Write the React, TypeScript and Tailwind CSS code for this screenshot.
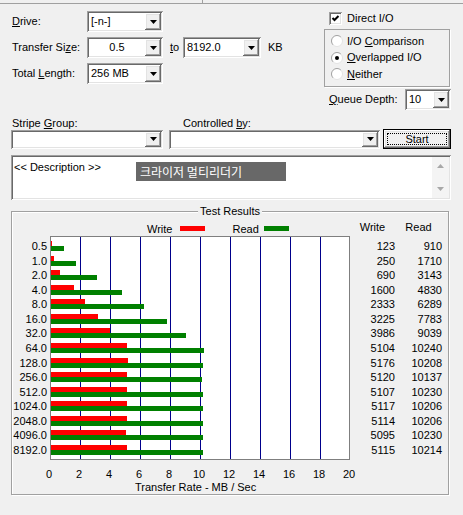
import React from 'react';

const results: [string, number, number][] = [
  ['0.5', 123, 910],
  ['1.0', 250, 1710],
  ['2.0', 690, 3143],
  ['4.0', 1600, 4830],
  ['8.0', 2333, 6289],
  ['16.0', 3225, 7783],
  ['32.0', 3986, 9039],
  ['64.0', 5104, 10240],
  ['128.0', 5176, 10208],
  ['256.0', 5120, 10137],
  ['512.0', 5107, 10230],
  ['1024.0', 5117, 10206],
  ['2048.0', 5114, 10206],
  ['4096.0', 5095, 10230],
  ['8192.0', 5115, 10214],
];

const ROW = 14.57;

const sunken =
  'shadow-[inset_1px_1px_0_#a0a0a0,inset_-1px_-1px_0_#ffffff,inset_2px_2px_0_#696969,inset_-2px_-2px_0_#e3e3e3]';
const raised =
  'shadow-[inset_-1px_-1px_0_#696969,inset_1px_1px_0_#ffffff,inset_-2px_-2px_0_#a0a0a0,inset_2px_2px_0_#e3e3e3]';

const Arrow = () => (
  <svg width="7" height="4" viewBox="0 0 7 4">
    <path d="M0 0h7L3.5 4z" fill="#000" />
  </svg>
);

const Combo = ({ value, size, center }: { value: string; size: string; center?: boolean }) => (
  <div className={`${sunken} ${size} bg-white flex items-center p-[2px]`}>
    <div className={`flex-1 px-[2px] whitespace-nowrap ${center ? 'text-center' : ''}`}>{value}</div>
    <div className={`${raised} w-[16px] h-full bg-[#f0f0f0] flex items-center justify-center`}>
      <Arrow />
    </div>
  </div>
);

const Radio = ({ checked }: { checked?: boolean }) => (
  <svg width="12" height="12" viewBox="0 0 12 12">
    <circle cx="6" cy="6" r="5.5" fill="#fff" />
    <path d="M2.1 9.9A5.5 5.5 0 0 1 9.9 2.1" stroke="#a0a0a0" fill="none" />
    <path d="M9.9 2.1A5.5 5.5 0 0 1 2.1 9.9" stroke="#e3e3e3" fill="none" />
    {checked && <circle cx="6" cy="6" r="2" fill="#000" />}
  </svg>
);

const Chart = () => (
  <div className="w-[300px] h-[224px] bg-white border border-[#7f7f7f]">
    <svg width="298" height="222" viewBox="1 1 298 222" shapeRendering="crispEdges" className="block">
      {[1, 2, 3, 4, 5, 6, 7, 8, 9].map((k) => (
        <line key={k} x1={30 * k + 0.5} x2={30 * k + 0.5} y1={0} y2={224} stroke="#00008b" />
      ))}
      {results.map(([s, w, r], i) => {
        const y = Math.round(5 + i * ROW);
        return (
          <g key={s}>
            <rect x={0} y={y} width={w * 0.015} height={5} fill="#ff0000" />
            <rect x={0} y={y + 5} width={r * 0.015} height={5} fill="#008000" />
          </g>
        );
      })}
    </svg>
  </div>
);

export default function App() {
  return (
    <div className="w-[463px] h-[515px] bg-[#f0f0f0] overflow-hidden text-[11px] leading-[13px] text-black font-['Liberation_Sans',Arial,sans-serif]">
      {/* toolbar edge */}
      <div className="h-[4px] flex border-b border-[#a0a0a0]">
        <div className="w-[203px] border-r border-[#a0a0a0]" />
      </div>

      <div className="flex pt-[7px]">
        <div className="ml-[12px] w-[312px] flex flex-col gap-[5px]">
          <div className="flex items-center h-[21px]">
            <div className="w-[75px]">
              <span className="underline">D</span>rive:
            </div>
            <Combo value="[-n-]" size="w-[76px] h-[21px]" />
          </div>
          <div className="flex items-center h-[21px]">
            <div className="w-[75px]">
              Transfer Si<span className="underline">z</span>e:
            </div>
            <Combo value="0.5" size="w-[76px] h-[21px]" center />
            <div className="ml-[7px] w-[13px]">
              <span className="underline">t</span>o
            </div>
            <Combo value="8192.0" size="w-[78px] h-[21px]" />
            <div className="ml-[7px]">KB</div>
          </div>
          <div className="flex items-center h-[21px]">
            <div className="w-[75px]">
              Total <span className="underline">L</span>ength:
            </div>
            <Combo value="256 MB" size="w-[76px] h-[21px]" />
          </div>
        </div>

        <div className="w-[127px] flex flex-col">
          <div className="mt-[1px] pl-[5px] flex items-center gap-[5px] h-[13px]">
            <div className={`${sunken} w-[13px] h-[13px] bg-white`}>
              <svg width="13" height="13" viewBox="0 0 13 13">
                <path d="M3.5 6L5.5 8L9.5 4" stroke="#000" strokeWidth="2" fill="none" />
              </svg>
            </div>
            <div>Direct I/O</div>
          </div>
          <div className="mt-[4px] w-[126px] h-[58px] border border-[#a0a0a0] shadow-[1px_1px_0_#ffffff] pt-[3px] pl-[6px]">
            {[
              ['I/O ', 'C', 'omparison', false],
              ['', 'O', 'verlapped I/O', true],
              ['', 'N', 'either', false],
            ].map(([a, u, b, c]) => (
              <div key={String(b)} className="h-[16.5px] flex items-center gap-[4px]">
                <Radio checked={Boolean(c)} />
                <div>
                  {a}
                  <span className="underline">{u}</span>
                  {b}
                </div>
              </div>
            ))}
          </div>
          <div className="mt-[2px] h-[21px] flex items-center pl-[5px]">
            <div className="w-[76px]">
              <span className="underline">Q</span>ueue Depth:
            </div>
            <Combo value="10" size="w-[46px] h-[21px]" />
          </div>
        </div>
      </div>

      <div className="mt-[7px] h-[12px] leading-[12px] flex">
        <div className="pl-[12px] w-[183px]">
          Stripe <span className="underline">G</span>roup:
        </div>
        <div>
          Controlled <span className="underline">b</span>y:
        </div>
      </div>

      <div className="mt-[0px] h-[20px] flex items-center pl-[11px]">
        <Combo value="" size="w-[152px] h-[19px]" />
        <div className="ml-[6px]">
          <Combo value="" size="w-[211px] h-[19px]" />
        </div>
        <div className="ml-[3px] w-[68px] h-[20px] border border-black bg-[#f0f0f0]">
          <div className={`${raised} w-full h-full p-[3px]`}>
            <div className="w-full h-full border border-dotted border-black flex items-center justify-center">
              Start
            </div>
          </div>
        </div>
      </div>

      <div className={`${sunken} relative mt-[6px] ml-[11px] w-[440px] h-[45px] bg-white p-[2px] flex`}>
        <div className="flex-1 pl-[1px] pt-[4px]">&lt;&lt; Description &gt;&gt;</div>
        <div className="w-[17px] h-full bg-[#f4f4f4] flex flex-col items-center justify-between py-[7px]">
          <svg width="7" height="4" viewBox="0 0 7 4">
            <path d="M0 4h7L3.5 0z" fill="#a8a8a8" />
          </svg>
          <svg width="7" height="4" viewBox="0 0 7 4">
            <path d="M0 0h7L3.5 4z" fill="#a8a8a8" />
          </svg>
        </div>
        <div className="absolute left-[125px] top-[7px] w-[150px] h-[19px] bg-[#686868] text-white text-[12px] leading-[19px] pl-[4px] font-['Noto_Sans_CJK_KR',sans-serif]">
          크라이저 멀티리더기
        </div>
      </div>

      <div className="relative mt-[11px] ml-[11px] w-[438px] h-[284px] border border-[#a0a0a0] shadow-[inset_1px_1px_0_#ffffff,1px_1px_0_#ffffff]">
        <div className="absolute left-1/2 -translate-x-1/2 top-[-7px] bg-[#f0f0f0] px-[2px] leading-[12px]">
          Test Results
        </div>
        <div className="flex">
          <div className="w-[35px] pt-[27px] text-right">
            {results.map(([s]) => (
              <div key={s} className="h-[14.57px] leading-[14.57px]">
                {s}
              </div>
            ))}
          </div>
          <div className="ml-[3px] w-[300px]">
            <div className="h-[24px] pt-[9px] leading-[12px] pl-[97px] flex items-center">
              <div>Write</div>
              <div className="ml-[8px] w-[25px] h-[5px] bg-[#ff0000]" />
              <div className="ml-[27px]">Read</div>
              <div className="ml-[5px] w-[25px] h-[5px] bg-[#008000]" />
            </div>
            <Chart />
            <div className="flex -ml-[16px] pt-[8px] leading-[12px]">
              {[0, 2, 4, 6, 8, 10, 12, 14, 16, 18, 20].map((n) => (
                <div key={n} className="w-[30px] shrink-0 text-center">
                  {n}
                </div>
              ))}
            </div>
            <div className="leading-[14px] pl-[85px]">Transfer Rate - MB / Sec</div>
          </div>
          <div className="w-[45px]">
            <div className="h-[24px] pt-[9px] leading-[12px] text-center">Write</div>
            <div className="pt-[3px] text-right">
              {results.map(([s, w]) => (
                <div key={s} className="h-[14.57px] leading-[14.57px]">
                  {w}
                </div>
              ))}
            </div>
          </div>
          <div className="w-[47px]">
            <div className="h-[24px] pt-[9px] leading-[12px] text-center">Read</div>
            <div className="pt-[3px] text-right">
              {results.map(([s, , r]) => (
                <div key={s} className="h-[14.57px] leading-[14.57px]">
                  {r}
                </div>
              ))}
            </div>
          </div>
        </div>
      </div>
    </div>
  );
}
